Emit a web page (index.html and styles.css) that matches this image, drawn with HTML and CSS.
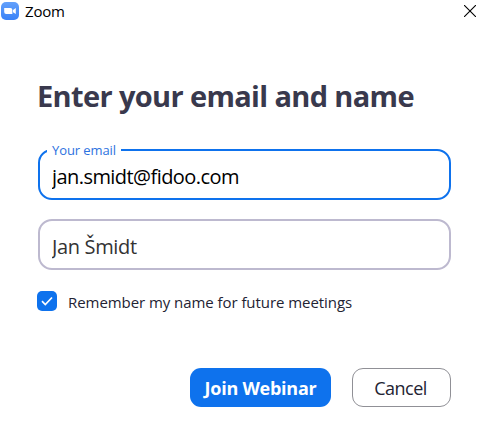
FILE: index.html
```
<!DOCTYPE html>
<html lang="en">
<head>
    <meta charset="UTF-8">
    <meta name="viewport" content="width=device-width, initial-scale=1.0">
    <title>Zoom</title>
    <link rel="stylesheet" href="styles.css">
</head>
<body>
    <header class="titlebar">
        <svg class="logo" width="18" height="18" viewBox="0 0 18 18">
            <defs>
                <linearGradient id="logoBg" x1="0" y1="0" x2="0" y2="1">
                    <stop offset="0" stop-color="#62a0fb"/>
                    <stop offset="1" stop-color="#3a82f7"/>
                </linearGradient>
            </defs>
            <rect width="18" height="18" rx="5" fill="url(#logoBg)"/>
            <path d="M3.2 6h6.2a2 2 0 0 1 2 2v4H5.2a2 2 0 0 1-2-2z" fill="#fff"/>
            <path d="M12 8l2.800-2v6L12 10.200z" fill="#fff"/>
        </svg>
        <span class="app-name">Zoom</span>
        <button class="close" type="button" aria-label="Close">
            <svg width="12" height="12" viewBox="0 0 12 12">
                <path d="M0 0l12 12M12 0L0 12" stroke="#000" stroke-width="1.1"/>
            </svg>
        </button>
    </header>
    <form class="join-form">
        <h1>Enter your email and name</h1>
        <div class="field active">
            <label for="email">Your email</label>
            <input id="email" type="text" value="jan.smidt@fidoo.com" spellcheck="false">
        </div>
        <div class="field">
            <input id="name" type="text" value="Jan Šmidt" aria-label="Your name" spellcheck="false">
        </div>
        <label class="remember">
            <input type="checkbox" checked>
            <span class="box">
                <svg width="12" height="10" viewBox="0 0 12 10">
                    <path d="M1 5.200l3.300 3.300L11 1.500" fill="none" stroke="#fff" stroke-width="1.700"/>
                </svg>
            </span>
            <span class="remember-text">Remember my name for future meetings</span>
        </label>
        <div class="actions">
            <button class="btn join" type="button"><span>Join Webinar</span></button>
            <button class="btn cancel" type="button"><span>Cancel</span></button>
        </div>
    </form>
</body>
</html>
```
FILE: styles.css
```
* {
    box-sizing: border-box;
    margin: 0;
    padding: 0;
}
body {
    font-family: "Open Sans", "Noto Sans", sans-serif;
    background: #fff;
    color: #232333;
    overflow: hidden;
}
.titlebar {
    display: flex;
    align-items: center;
    height: 22px;
    padding: 0 11px 0 1px;
}
.app-name {
    margin-left: 6px;
    font-size: 15px;
    line-height: 20px;
    letter-spacing: -0.2px;
    color: #000;
}
.close {
    display: flex;
    margin-left: auto;
    border: none;
    background: none;
}
.join-form {
    display: flex;
    flex-direction: column;
    width: 414px;
    margin-left: 37px;
    padding-top: 54px;
}
h1 {
    height: 40px;
    font-size: 29px;
    line-height: 40px;
    letter-spacing: -0.64px;
    white-space: nowrap;
    color: #39394d;
}
.field {
    position: relative;
    height: 51px;
    margin: 33px 0 0 1px;
    border: 2px solid #bdb9cf;
    border-radius: 14px;
}
.field + .field {
    margin-top: 19px;
}
.field.active {
    border-color: #0e72ed;
}
.field label {
    position: absolute;
    top: -10px;
    left: 7px;
    padding: 0 5px;
    background: #fff;
    font-size: 13px;
    line-height: 18px;
    letter-spacing: -0.1px;
    color: #2d72e0;
}
.field input {
    width: 100%;
    height: 47px;
    padding: 4px 12px 0;
    border: none;
    border-radius: 12px;
    outline: none;
    background: none;
    font-family: inherit;
    font-size: 20px;
    letter-spacing: -0.35px;
    color: #333;
}
.field.active input {
    letter-spacing: -0.56px;
    color: #000;
}
.remember {
    display: flex;
    align-items: center;
    height: 20px;
    margin-top: 21px;
    font-size: 15px;
}
.remember input {
    display: none;
}
.box {
    display: flex;
    align-items: center;
    justify-content: center;
    width: 20px;
    height: 20px;
    border-radius: 5px;
    background: #0e72ed;
}
.remember-text {
    margin-left: 11px;
    padding-top: 2px;
    letter-spacing: -0.06px;
    white-space: nowrap;
}
.actions {
    display: flex;
    justify-content: flex-end;
    gap: 21px;
    margin-top: 57px;
}
.btn {
    height: 39px;
    border-radius: 11px;
    font-family: inherit;
    font-size: 18px;
    white-space: nowrap;
}
.join {
    width: 141px;
    border: none;
    background: #0e72ed;
    color: #fff;
    font-weight: 700;
    letter-spacing: -0.25px;
}
.cancel {
    width: 99px;
    padding-right: 2px;
    border: 1px solid #909096;
    background: #fff;
    color: #232333;
    letter-spacing: -0.5px;
}
```
